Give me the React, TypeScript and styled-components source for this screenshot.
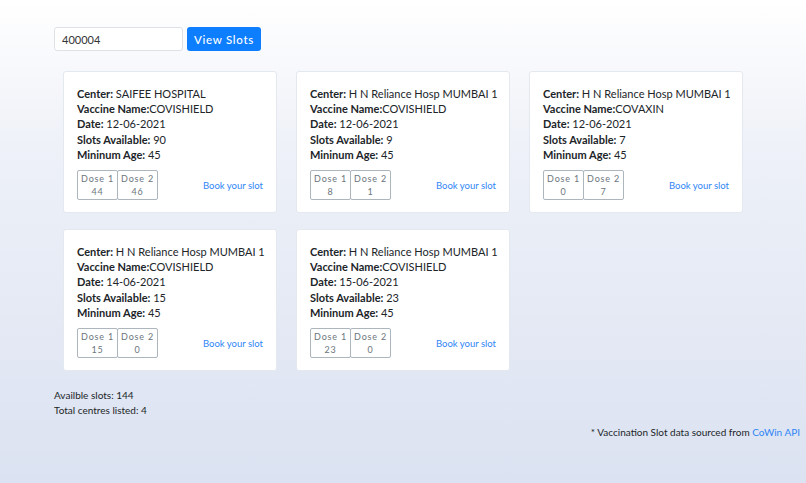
import * as React from 'react';
import styled, { createGlobalStyle } from 'styled-components';

const Global = createGlobalStyle`
  html, body { margin: 0; padding: 0; }
  body {
    font-family: Lato, "Noto Sans", sans-serif;
    color: #212529;
    background: linear-gradient(180deg, #ffffff 0%, #eef1f8 30%, #dbe2f1 100%);
    min-height: 483px;
  }
`;

const Page = styled.div`
  min-height: 483px;
  box-sizing: border-box;
  padding: 27px 6px 0 54px;
`;

const SearchRow = styled.div`
  display: flex;
  gap: 4px;
  height: 24px;
`;

const Input = styled.input`
  width: 129px;
  box-sizing: border-box;
  border: 1px solid #dee2e6;
  border-radius: 3px;
  padding: 0 7px;
  font: 11px Lato, sans-serif;
  color: #333;
  background: #fff;
`;

const Button = styled.button`
  width: 74px;
  border: none;
  border-radius: 3px;
  background: #0d7efd;
  color: #fff;
  font: 500 11.5px Lato, sans-serif;
  letter-spacing: 0.7px;
  white-space: nowrap;
  padding: 0;
`;

const Grid = styled.div`
  display: grid;
  grid-template-columns: repeat(3, 214px);
  column-gap: 19px;
  row-gap: 16px;
  margin: 20px 0 0 9px;
`;

const Card = styled.div`
  background: #fff;
  border: 1px solid #e4e8ef;
  border-radius: 3px;
  height: 142px;
  box-sizing: border-box;
  padding: 14px 13px 0 13px;
`;

const Line = styled.div`
  font-size: 11px;
  line-height: 15.2px;
  white-space: nowrap;
  b { font-weight: 700; }
`;

const Bottom = styled.div`
  display: flex;
  align-items: center;
  justify-content: space-between;
  margin-top: 8px;
`;

const Doses = styled.div`
  display: flex;
`;

const Dose = styled.div`
  width: 41px;
  height: 30px;
  box-sizing: border-box;
  border: 1px solid #adb5bd;
  border-radius: 2px;
  display: flex;
  flex-direction: column;
  align-items: center;
  justify-content: center;
  font-size: 9px;
  line-height: 13px;
  color: #6c757d;
  letter-spacing: 0.8px;
  & + & { margin-left: -1px; }
`;

const Book = styled.a`
  color: #2f86f6;
  font-size: 9.5px;
  text-decoration: none;
`;

const Stats = styled.div`
  margin-top: 17px;
  font-size: 10px;
  line-height: 15px;
`;

const Note = styled.div`
  text-align: right;
  font-size: 10px;
  margin-top: 8px;
  a { color: #2f86f6; text-decoration: none; }
`;

const centers = [
  { c: 'SAIFEE HOSPITAL', v: 'COVISHIELD', d: '12-06-2021', s: 90, a: 45, d1: 44, d2: 46 },
  { c: 'H N Reliance Hosp MUMBAI 1', v: 'COVISHIELD', d: '12-06-2021', s: 9, a: 45, d1: 8, d2: 1 },
  { c: 'H N Reliance Hosp MUMBAI 1', v: 'COVAXIN', d: '12-06-2021', s: 7, a: 45, d1: 0, d2: 7 },
  { c: 'H N Reliance Hosp MUMBAI 1', v: 'COVISHIELD', d: '14-06-2021', s: 15, a: 45, d1: 15, d2: 0 },
  { c: 'H N Reliance Hosp MUMBAI 1', v: 'COVISHIELD', d: '15-06-2021', s: 23, a: 45, d1: 23, d2: 0 },
];

export default function App() {
  return (
    <Page>
      <Global />
      <SearchRow>
        <Input defaultValue="400004" />
        <Button>View Slots</Button>
      </SearchRow>
      <Grid>
        {centers.map((x, i) => (
          <Card key={i}>
            <Line><b>Center:</b> {x.c}</Line>
            <Line><b>Vaccine Name:</b>{x.v}</Line>
            <Line><b>Date:</b> {x.d}</Line>
            <Line><b>Slots Available:</b> {x.s}</Line>
            <Line><b>Mininum Age:</b> {x.a}</Line>
            <Bottom>
              <Doses>
                <Dose><span>Dose 1</span><span>{x.d1}</span></Dose>
                <Dose><span>Dose 2</span><span>{x.d2}</span></Dose>
              </Doses>
              <Book href="#">Book your slot</Book>
            </Bottom>
          </Card>
        ))}
      </Grid>
      <Stats>
        <div>Availble slots: 144</div>
        <div>Total centres listed: 4</div>
      </Stats>
      <Note>* Vaccination Slot data sourced from <a href="#">CoWin API</a></Note>
    </Page>
  );
}
